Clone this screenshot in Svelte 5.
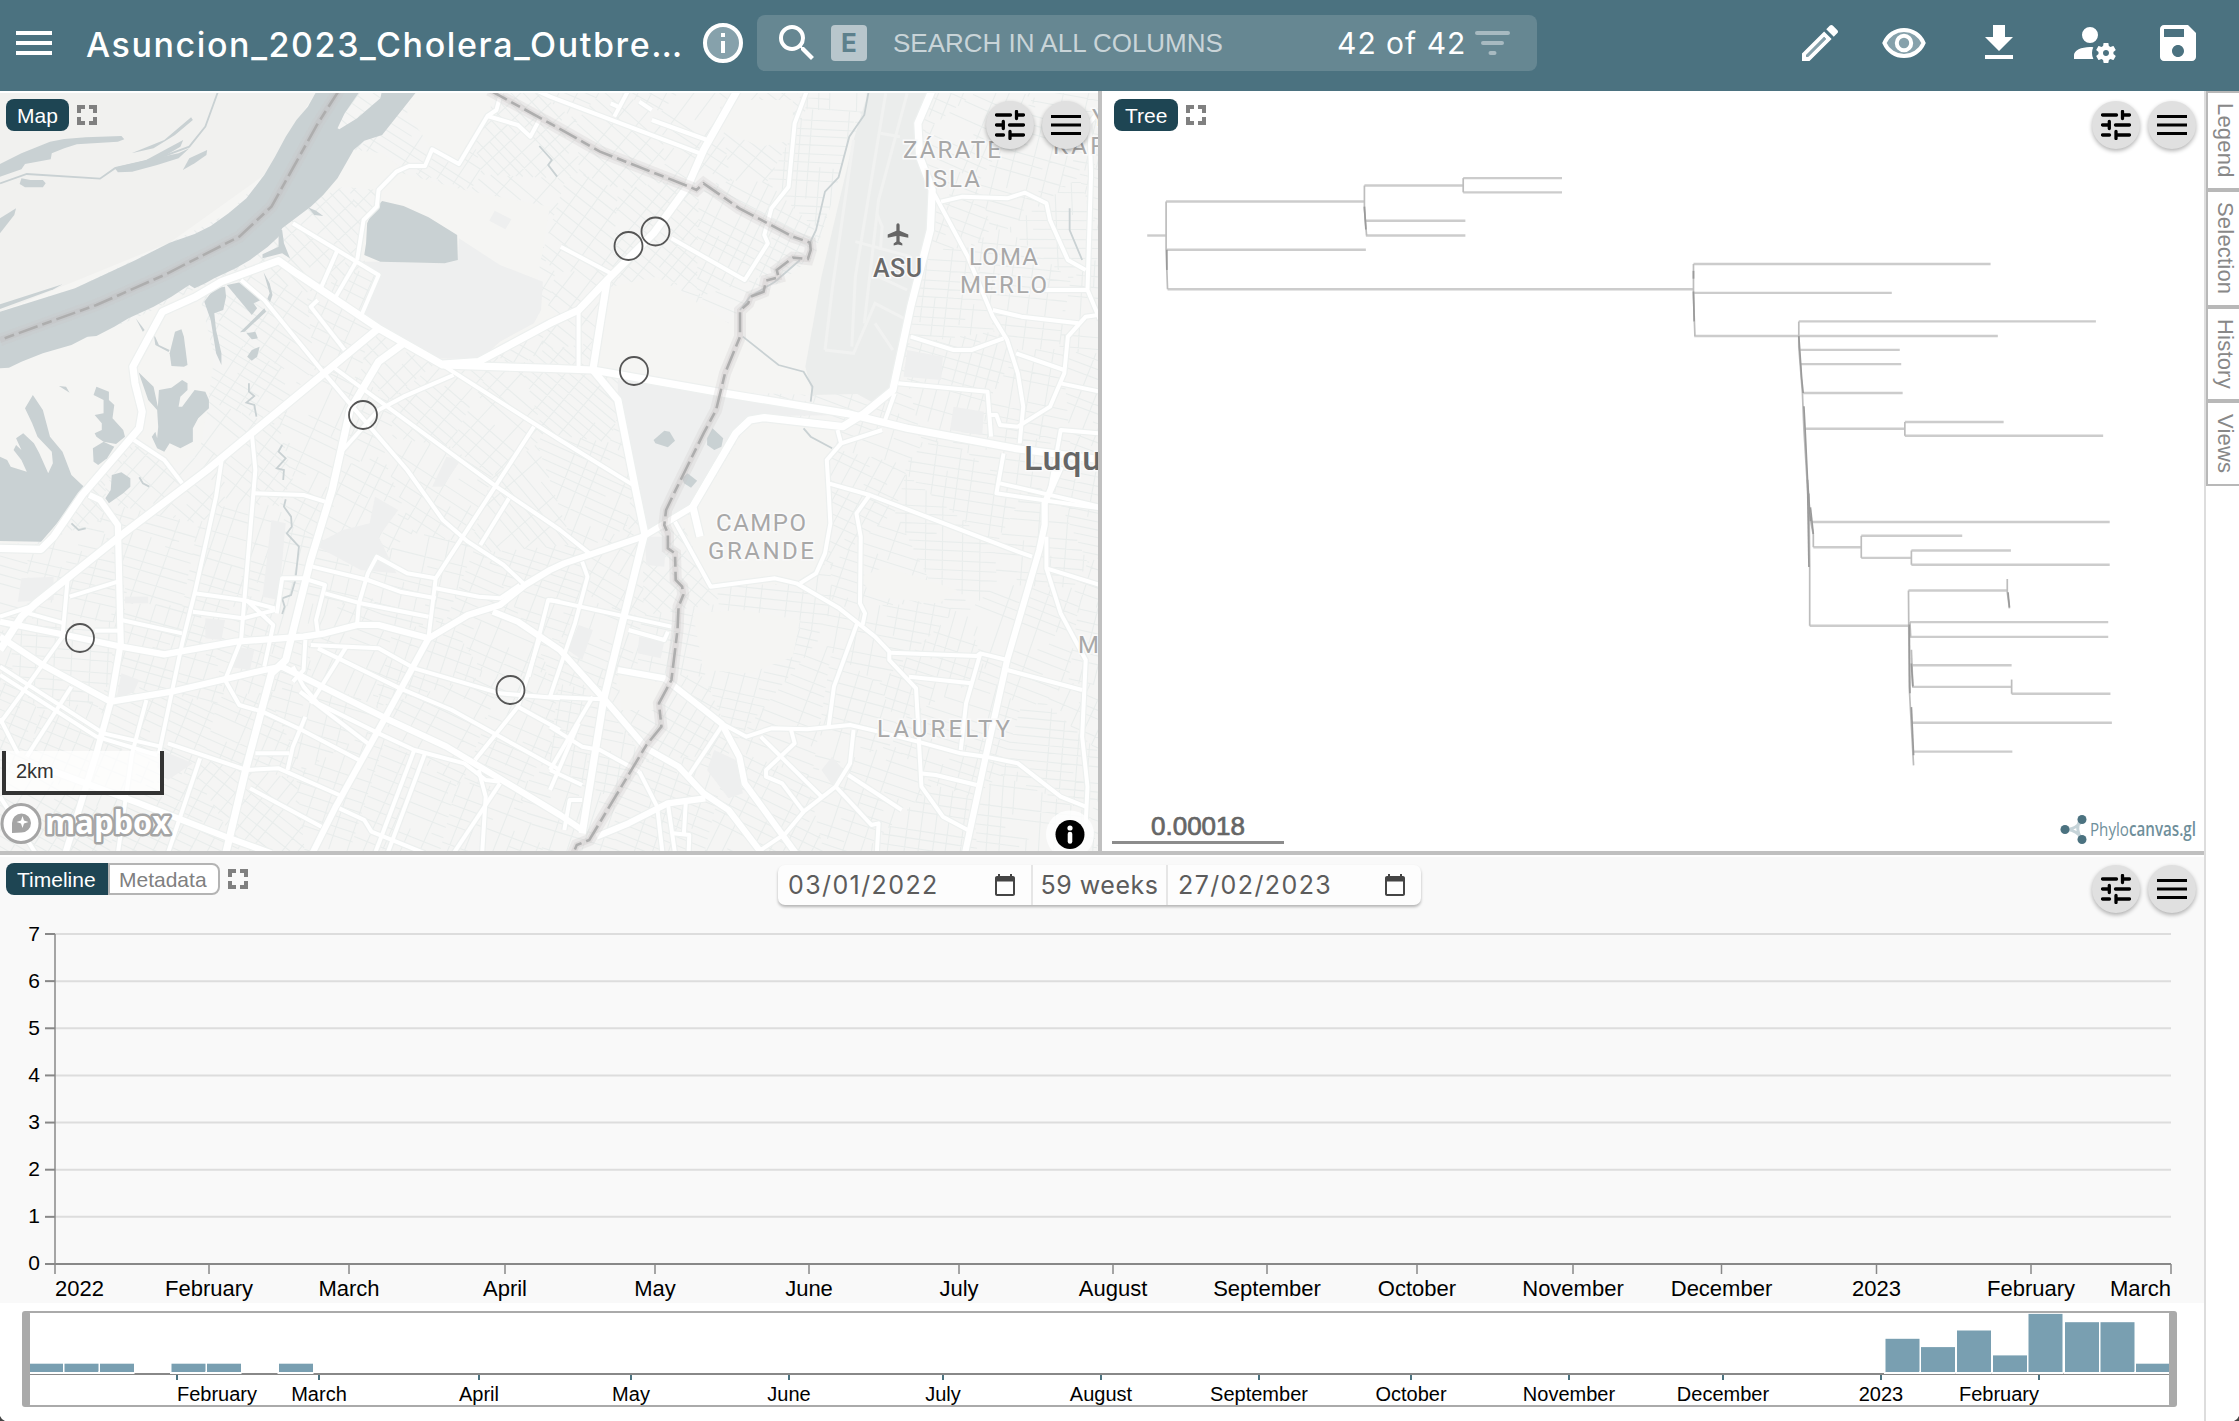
<script>
  // Material icon outlines, 24-unit box
  const icons = {
    menu: 'M3 18h18v-2H3v2zm0-5h18v-2H3v2zm0-7v2h18V6H3z',
    search: 'M15.5 14h-.79l-.28-.27A6.471 6.471 0 0 0 16 9.5 6.5 6.5 0 1 0 9.5 16c1.61 0 3.09-.59 4.23-1.57l.27.28v.79l5 4.99L20.49 19l-4.99-5zm-6 0C7.01 14 5 11.99 5 9.5S7.01 5 9.5 5 14 7.01 14 9.5 11.99 14 9.5 14z',
    edit: 'M14.06 9.02l.92.92L5.92 19H5v-.92l9.06-9.06M17.66 3c-.25 0-.51.1-.7.29l-1.83 1.83 3.75 3.75 1.83-1.83c.39-.39.39-1.02 0-1.41l-2.34-2.34c-.2-.2-.45-.29-.71-.29zm-3.6 3.19L3 17.25V21h3.75L17.81 9.94l-3.75-3.75z',
    download: 'M5 20h14v-2H5v2zM19 9h-4V3H9v6H5l7 7 7-7z',
    account: 'M10 4A4 4 0 0 0 6 8A4 4 0 0 0 10 12A4 4 0 0 0 14 8A4 4 0 0 0 10 4M17 12C16.87 12 16.76 12.09 16.74 12.21L16.55 13.53C16.25 13.66 15.96 13.82 15.7 14L14.46 13.5C14.35 13.5 14.22 13.5 14.15 13.63L13.15 15.36C13.09 15.47 13.11 15.6 13.21 15.68L14.27 16.5C14.25 16.67 14.24 16.83 14.24 17C14.24 17.17 14.25 17.33 14.27 17.5L13.21 18.32C13.12 18.4 13.09 18.53 13.15 18.64L14.15 20.37C14.21 20.5 14.34 20.5 14.46 20.5L15.7 20C15.96 20.18 16.24 20.35 16.55 20.47L16.74 21.79C16.76 21.91 16.86 22 17 22H19C19.11 22 19.22 21.91 19.24 21.79L19.43 20.47C19.73 20.34 20 20.18 20.27 20L21.5 20.5C21.63 20.5 21.76 20.5 21.83 20.37L22.83 18.64C22.89 18.53 22.86 18.4 22.77 18.32L21.7 17.5C21.72 17.33 21.74 17.17 21.74 17C21.74 16.83 21.73 16.67 21.7 16.5L22.76 15.68C22.85 15.6 22.88 15.47 22.82 15.36L21.82 13.63C21.76 13.5 21.63 13.5 21.5 13.5L20.27 14C20 13.82 19.73 13.65 19.42 13.53L19.23 12.21C19.22 12.09 19.11 12 19 12H17M10 14C5.58 14 2 15.79 2 18V20H11.68A7 7 0 0 1 11 17A7 7 0 0 1 11.64 14.09C11.11 14.03 10.56 14 10 14M18 15.5C18.83 15.5 19.5 16.16 19.5 17C19.5 17.84 18.83 18.5 18 18.5C17.16 18.5 16.5 17.84 16.5 17C16.5 16.16 17.17 15.5 18 15.5Z',
    save: 'M17 3H5c-1.11 0-2 .9-2 2v14c0 1.1.89 2 2 2h14c1.1 0 2-.9 2-2V7l-4-4zm-5 16c-1.66 0-3-1.34-3-3s1.34-3 3-3 3 1.34 3 3-1.34 3-3 3zm3-10H5V5h10v4z',
    plane: 'M21.500 15.500v-3L13.500 9V4C13.500 2.800 12.800 2 12 2s-1.500.8-1.500 2V9l-8 3.500v3l8-1.700V19l-2.500 1.700V22.500l4-.8 4 .8v-1.800L13.500 19v-5.200l8 1.700z'
  };

  // ---- street network ----
  let state = 20230;
  const rnd = () => {
    state = (state * 1664525 + 1013904223) % 4294967296;
    return state / 4294967296;
  };

  function clipHalf(poly, px, py, nx, ny) {
    const out = [];
    for (let i = 0; i < poly.length; i++) {
      const a = poly[i], b = poly[(i + 1) % poly.length];
      const da = (a[0] - px) * nx + (a[1] - py) * ny;
      const db = (b[0] - px) * nx + (b[1] - py) * ny;
      if (da <= 0) out.push(a);
      if (da * db < 0) {
        const t = da / (da - db);
        out.push([a[0] + (b[0] - a[0]) * t, a[1] + (b[1] - a[1]) * t]);
      }
    }
    return out;
  }

  // interval of the line p + t*d inside a convex polygon
  function span(poly, px, py, dx, dy) {
    const hits = [];
    for (let i = 0; i < poly.length; i++) {
      const a = poly[i], b = poly[(i + 1) % poly.length];
      const sa = (a[0] - px) * dy - (a[1] - py) * dx;
      const sb = (b[0] - px) * dy - (b[1] - py) * dx;
      if (sa * sb < 0) {
        const t = sa / (sa - sb);
        const x = a[0] + (b[0] - a[0]) * t, y = a[1] + (b[1] - a[1]) * t;
        hits.push((x - px) * dx + (y - py) * dy);
      }
    }
    return hits.length > 1 ? [Math.min(...hits), Math.max(...hits)] : null;
  }

  function baseAngle(x, y) {
    if (x < 560) return y < 520 ? 38 : y < 660 ? 14 : 27;
    if (x < 760) return y < 420 ? 30 : y < 620 ? 34 : 22;
    return y < 480 ? 12 : 14;
  }

  function buildStreets() {
    const seeds = [];
    for (let gy = 60; gy < 900; gy += 84)
      for (let gx = -20; gx < 1160; gx += 88)
        seeds.push([gx + (rnd() - 0.5) * 70, gy + (rnd() - 0.5) * 66]);
    let d = '';
    for (const s of seeds) {
      let cell = [[-10, 85], [1105, 85], [1105, 860], [-10, 860]];
      for (const o of seeds) {
        if (o === s) continue;
        cell = clipHalf(cell, (s[0] + o[0]) / 2, (s[1] + o[1]) / 2, o[0] - s[0], o[1] - s[1]);
      }
      if (cell.length < 3) continue;
      const base = (baseAngle(s[0], s[1]) + (rnd() - 0.5) * 24) * Math.PI / 180;
      const step = [8 + rnd() * 3, 11 + rnd() * 8];
      for (let f = 0; f < 2; f++) {
        const an = base + f * (Math.PI / 2 + (rnd() - 0.5) * 0.12);
        const dx = Math.cos(an), dy = Math.sin(an);
        for (let k = -110; k < 110; k += step[f] * (0.85 + rnd() * 0.35)) {
          const px = s[0] - dy * k, py = s[1] + dx * k;
          const iv = span(cell, px, py, dx, dy);
          if (!iv) continue;
          let t = iv[0];
          while (t < iv[1]) {
            const e = Math.min(iv[1], t + 20 + rnd() * 70);
            if (rnd() > 0.17)
              d += `M${(px + dx * t).toFixed(1)} ${(py + dy * t).toFixed(1)}L${(px + dx * e).toFixed(1)} ${(py + dy * e).toFixed(1)}`;
            t = e;
          }
        }
      }
    }
    return d;
  }
  const streets = buildStreets();

  // Quadrants of the base map: offset, then geometry in map units
  const openLand = [
    { x: 0, y: 0, d: ['0,0 888,0 862,50 740,255 640,370 475,458 210,595 0,665', '0,830 250,740 380,685 560,590 620,575 460,670 372,830 398,965 390,1015 150,1340 0,1370', '1160,0 1390,0 1365,78 1285,222 1210,178 1140,70', '1070,300 1110,245 1300,300 1540,350 1500,600 1568,690 1340,825 1215,805 1015,680 1060,555 1010,500 1025,390', '900,320 990,180 1070,190 1120,230 1060,300 960,290', '440,690 560,620 600,800 580,960 560,1080 480,1130 380,1040 398,965 380,850'] },
    { x: 1540, y: 0, d: ['170,590 300,560 500,700 530,660 530,740 480,900 130,830', '530,660 600,610 740,500 800,300 860,60 730,915 490,905', '480,30 680,30 680,150 590,170 480,120', '430,1220 560,990 600,985 805,1020 775,1110 785,1300 745,1450 690,1480 450,1490 370,1300'] },
    { x: 1540, y: 1140, d: ['400,430 540,420 700,450 680,560 560,610 430,600', '190,610 320,640 300,720 200,720', '870,320 940,290 1140,360 1090,400 900,380'] }
  ];
  const parks = [
    { x: 0, y: 0, d: ['1285,445 1400,525 1520,575 1515,660 1495,700 1400,755 1345,808 1215,805 1015,680 1062,555 1010,515 1070,515 1245,520 1282,510', '1385,362 1432,388 1415,418 1370,392', '1250,1100 1290,1110 1240,1190 1210,1190'] },
    { x: 1540, y: 0, d: ['190,870 490,915 850,975 600,978 550,990 515,1030 420,1220 320,1320 265,1340 235,1200 190,930', '1000,780 1100,800 1095,870 990,860', '1130,950 1215,965 1210,1035 1120,1020'] },
    { x: 0, y: 1140, d: ['1050,80 1115,120 1060,200 1110,310 1010,300 880,225 960,180 1035,160', '760,150 800,160 780,390 735,380', '575,445 630,450 620,510 575,505', '660,530 712,540 700,600 640,590', '60,325 150,320 150,390 50,395', '340,610 390,630 375,665 325,690', '450,840 540,880 470,930 440,890', '350,380 415,380 415,400 350,400'] },
    { x: 1540, y: 1140, d: ['460,840 520,870 540,970 500,985 440,900', '265,200 325,200 320,290 270,285', '80,465 120,480 90,570 50,540', '790,860 830,910 790,945 760,900', '250,500 320,515 310,565 245,550'] }
  ];
  const water = [
    { x: 0, y: 0, d: [
      '888,0 862,50 830,90 800,140 770,200 740,255 690,325 640,370 590,408 545,432 475,458 380,510 210,595 0,665 0,835 25,833 60,815 120,790 200,765 245,740 270,738 320,710 360,685 430,650 480,620 530,585 545,595 575,580 600,565 660,535 700,510 750,470 780,440 790,415 870,350 905,315 945,265 990,180 1020,152 1070,135 1170,0 1070,0 1065,25 1000,85 950,118 945,115 965,70 1010,0',
      '0,222 60,190 140,155 180,147 240,142 340,138 348,148 330,155 215,163 180,175 145,190 142,208 70,222 60,238 0,260',
      '320,232 400,212 500,190 530,175 500,205 440,225 370,245 330,247', '368,190 460,150 535,82 540,90 490,135 430,175', '395,218 470,175 513,150 505,170 450,205', '512,240 530,205 580,180 578,195 545,220', '60,265 85,270 120,270 128,280 120,292 70,292 55,282', '0,385 45,355 40,375 0,430', '0,643 175,583 150,598 0,657',
      '1070,333 1130,348 1200,382 1280,435 1282,510 1245,520 1065,515 1020,495 1025,460 1028,400 1045,360',
      '780,420 790,420 795,460 812,505 790,490 735,505 735,493 780,470', '862,352 885,362 905,378 880,375',
      '490,725 508,718 515,740 525,825 515,830 480,828 475,790', '572,635 600,595 630,590 633,620 625,660 600,670 605,720 620,790 620,825 605,790 590,690', '635,585 680,575 730,630 710,640 720,655 705,675', '740,655 745,665 685,725 672,727', '738,547 755,580 763,615 755,640 745,635 755,610', '690,730 715,725 722,745 705,748', '692,800 705,780 727,770 720,800 705,812', '380,685 405,720 400,725', '430,730 445,765 475,780 472,786 435,765',
      '445,900 480,893 510,870 525,880 525,900 505,920 500,950 510,950 545,900 575,905 585,930 585,955 555,985 540,1015 540,1055 505,1075 475,1060 460,1085 440,1075 425,1040 435,1025 440,1045 443,1010 440,960 415,930 388,847 430,890 442,950',
      '0,1100 20,1110 30,1130 75,1145 60,1110 38,1080 45,1065 60,1080 45,1045 65,1030 95,1060 110,1090 135,1150 148,1120 145,1085 105,1040 90,1000 70,955 92,915 120,960 140,1040 175,1085 200,1155 235,1190 200,1250 115,1355 0,1353',
      '270,890 305,905 305,930 320,945 315,985 345,1020 350,1040 325,1062 290,1055 270,1040 265,1030 285,1020 285,1000 265,975 290,970 290,930 262,915', '260,1075 290,1055 320,1070 300,1105 275,1125 262,1115', '313,1155 340,1147 365,1165 365,1190 345,1210 305,1240 295,1225 310,1200', '165,888 185,890 195,908'] },
    { x: 1540, y: 0, d: ['290,1050 320,1022 335,1025 350,1052 330,1072 295,1060', '440,1045 455,1015 485,1045 480,1070 460,1080 440,1065', '370,1165 385,1150 412,1172 395,1193 375,1180'] }
  ];
  const creeks = [
    { x: 0, y: 0, d: ['0,280 75,252 280,266 320,236 440,206 530,170 575,110 612,0', '697,880 697,905 712,918 690,938 712,945 718,980', '790,1065 780,1085 800,1105 775,1135 795,1140 793,1170', '1510,168 1545,210 1535,225 1560,260', '390,1162 400,1180 418,1190'] },
    { x: 0, y: 1140, d: ['800,88 795,110 815,140 817,170 803,190 837,230 827,330 815,375 790,385 797,410 790,432', '200,160 220,180 240,175'] },
    { x: 1540, y: 0, d: ['893,0 880,75 838,140 808,262 770,305 745,420 725,465', '700,510 630,575 560,620 532,660', '540,740 640,825 710,845 735,890 730,935', '710,1015 730,1040 790,1075', '1455,355 1455,420 1490,510'] }
  ];
  const boundary = [
    '950,0 890,100 825,225 760,350 670,440 460,555 270,645 140,695 0,750',
    '1370,0 1540,100 1680,185 1930,290 1950,300 1970,280 2070,355 2220,440 2268,458 2270,480 2262,507 2220,503 2175,540 2180,562 2145,572 2138,605 2102,620 2095,640 2072,662 2072,740 2030,850 2005,960 1970,1030 1885,1215 1865,1260 1860,1305 1870,1330 1870,1375 1890,1390 1892,1470 1910,1490 1913,1515 1900,1550 1897,1620 1880,1770 1845,1840 1852,1910 1810,1965 1650,2250 1615,2265 1605,2290'
  ];
  const roads = [
    { w: 7.2, x: 0, y: 0, d: ['-5,1375 115,1378 150,1340 230,1215 390,1015 398,965 378,880 372,830 455,665 545,622 620,575 780,512 830,550 1060,715 1240,825 1540,835 1660,840 2030,910 2370,970 2540,1015 2840,1075 3090,1110', '1060,715 580,1140 340,1335 100,1540 60,1580 0,1680', '1130,760 1060,815 980,960 930,1200 870,1410 800,1710 760,1750 690,2030 630,2300', '1240,822 1340,815 1540,700 1620,660 1700,570 1830,430 1925,290 1970,180 2065,0', '1660,840 1730,930 1780,1200 1805,1330 1740,1610 1690,1830 1630,2230', '1960,1340 1940,1250 2060,1030 2100,990 2140,983 2360,1010 2420,970 2500,900 2550,650 2605,420 2610,300 2575,200 2570,100 2610,0', '1700,570 1660,840'] },
    { w: 6.2, x: 0, y: 1140, d: ['0,455 160,490 340,530 460,553 660,515 850,500 910,490 1000,465 1060,465 1200,505 1310,435 1400,405 1470,345 1540,300 1580,280 1800,200 1940,110 2010,-20', '0,500 120,585 310,695 480,665 740,600 790,590 1080,745 1250,830 1568,1035 1630,1080', '1200,505 1080,740 940,1010 870,1160', '250,75 280,90 330,165 338,520 310,695 270,850 180,1160', '140,900 390,1000 630,1100 760,1150', '1380,425 1450,455 1568,540 1690,685 1810,835 1900,890 1970,970 2040,1020 2140,1160', '1730,600 1860,625 2020,760 2070,860 2085,940 2235,1160', '2970,-10 2925,100 2925,165 2910,240 2820,570 2760,860 2700,1160', '1670,1100 1760,1060 1870,1000 1975,985'] },
    { w: 4, x: 0, y: 0, d: ['675,570 740,630 900,840 975,935 1140,1140 1240,1290 1310,1355 1410,1425 1470,1485', '925,825 1390,1190 1568,1320 1650,1390', '820,400 1060,555 1010,680', '945,480 900,590', '1000,510 935,630', '1000,510 1018,390 1055,350 1060,300 1110,245 1145,228 1190,228 1210,178 1285,222 1365,78 1390,60 1405,0', '1365,78 1450,105 1485,140 1510,90', '890,630 870,650 965,780', '1270,855 1130,920 1060,960 960,1080', '1210,805 1568,1050 1780,1190', '1495,1010 1220,1465 1200,1640', '375,1050 460,1110 510,1180', '622,1100 605,1220 545,1510 510,1660 445,1990', '705,1030 715,1140 685,1520 675,1650 630,1770 670,1845 735,1865 845,1920 1005,2010'] },
    { w: 4, x: 0, y: 1140, d: ['190,320 175,500 75,650 0,760', '0,440 100,405', '195,380 330,335', '340,450 510,490', '545,370 680,390 770,415', '540,425 680,445 770,420', '690,390 765,465 740,590', '712,70 850,75 910,95', '775,430 790,325 850,325 910,345 885,450 890,490', '875,290 1030,330 1120,365 1220,385', '910,370 1010,400 1200,440', '1000,460 1005,400 1030,310 1055,260 1140,310 1220,325', '1220,355 1340,380 1400,385 1455,345', '1345,225 1425,85', '0,590 290,790 450,830', '0,615 270,800 440,855', '470,820 690,900 780,895 950,975', '200,650 75,860', '0,745 50,850', '560,865 470,1150', '410,690 370,850 330,1150', '715,850 810,850', '855,740 820,830 805,900', '970,530 870,700', '855,510 850,600 820,635', '870,525 1060,535 1160,595 1400,670 1568,685', '890,535 1120,655 1265,720 1568,900', '820,590 850,650 890,700 1060,790', '840,665 1030,820', '700,955 900,1070', '950,1015 1020,1050 1040,1085 1190,1150', '1060,790 1160,840 1300,880 1360,930 1400,935', '1160,840 1050,1150', '1190,850 1085,1150', '1340,900 1360,980 1350,1150', '1400,940 1270,1150', '1510,510 1450,710 1330,870', '1450,710 1568,780', '1568,395 1535,390 1480,620', '80,430 180,460', '265,482 335,482', '0,980 100,1150'] },
    { w: 4, x: 1540, y: 0, d: ['-60,-10 0,20 420,190', '180,80 220,0', '170,40 190,50', '250,35 285,60', '285,90 440,150', '720,0 685,100 668,290 620,355 600,435 610,460 545,570 340,445', '30,470 170,550', '80,660 80,830', '1095,335 1155,320 1280,325 1330,308 1390,340 1400,390 1450,510 1500,540', '1075,310 1170,500 1240,680 1280,750 1310,850 1325,950 1315,1060', '1240,660 1320,680 1480,700', '1010,740 1130,780 1180,780 1270,745', '975,880 1225,905 1235,1040', '965,910 935,1000', '1305,790 1440,840', '1360,600 1505,600', '1540,60 1510,100 1515,250 1505,600 1540,690', '1535,675 1500,680 1450,740 1440,850 1400,950 1310,1010 1260,1005 1250,975 1230,975', '1430,880 1540,905', '1540,1030 1430,1020 1400,1200', '1270,1090 1250,1210 1540,1255', '1260,1180 1540,1250', '805,1020 815,1060 775,1110 780,1200 785,1300 770,1390 745,1450 700,1480', '815,1060 930,1020'] },
    { w: 4, x: 1540, y: 1140, d: ['350,155 450,350 630,325 690,340 810,415 910,500 950,545 950,570 1025,655 1040,950 1100,1040 1170,1080', '780,40 895,75 1310,245 1350,260', '895,75 858,130 870,200 868,400 882,430 875,465', '860,460 795,650 780,770', '480,760 550,800 620,775 720,778 840,765 920,785 1030,815 1150,850 1220,860 1310,880 1430,980 1500,1010', '1390,200 1390,295 1430,430 1500,570 1490,800 1505,950 1500,1060', '1390,295 1540,345', '955,548 1195,558 1205,550 1280,570', '1005,620 1180,640', '1205,550 1165,700 1150,840', '1280,600 1490,660', '1035,910 1080,915 1195,945', '480,770 390,915', '590,800 760,980', '675,780 685,820 605,900 605,920 650,940 710,1025 800,950 840,880 850,780', '710,1025 660,1090 590,1140', '800,950 900,1065 920,1060 915,1150', '835,915 985,1020', '330,1000 350,1150', '380,1000 375,1090', '345,1090 390,1095 388,1150', '250,905 300,1010 315,1150', '0,770 90,830 140,840 250,905', '0,390 85,410 340,470', '220,480 320,510 330,485', '90,275 105,320 70,460 0,680 145,688', '120,680 0,900', '0,900 90,945', '90,990 55,990 40,1080', '80,760 0,960'] }
  ];
  const runways = ['940,10 855,560 845,770', '1000,10 920,330 880,700', '855,455 1010,500', '770,780 850,790 910,640 1000,690', '915,370 930,410 925,480', '925,130 980,140', '910,700 960,780', '920,560 1000,600', '770,780 790,600 850,150'];

  const labels = [
    { t: 'ZÁRATE', x: 903, y: 158, w: 98 }, { t: 'ISLA', x: 924, y: 187, w: 56 },
    { t: 'LOMA', x: 969, y: 265, w: 69 }, { t: 'MERLO', x: 960, y: 293, w: 87 },
    { t: 'CAMPO', x: 716, y: 531, w: 90 }, { t: 'GRANDE', x: 708, y: 559, w: 106 },
    { t: 'LAURELTY', x: 877, y: 737, w: 133 }, { t: 'M', x: 1078, y: 653, w: 18 },
    { t: 'KAR', x: 1053, y: 154, w: 52 }, { t: 'Y', x: 1092, y: 126, w: 17 }
  ];
  const cases = [[655.5, 231.5], [628.5, 246], [634, 371], [363, 415], [80, 638], [510.5, 690]];

  // ---- tree branches ----
  const branchesH = [[65, 208, 91], [91, 134, 364], [364, 99, 500], [500, 83, 636], [500, 114, 636], [366, 176, 503], [366, 208, 503], [92, 239, 366], [93, 325, 817], [817, 270, 1226], [818, 333, 1090], [818, 427, 1236], [962, 395, 1371], [964, 457, 1101], [965, 488, 1103], [968, 551, 1105], [971, 629, 1108], [1108, 614, 1244], [1108, 644, 1381], [980, 832, 1390], [982, 887, 1048], [1048, 862, 1187], [1048, 910, 1117], [1117, 894, 1254], [1117, 925, 1390], [977, 1058, 1114], [1113, 981, 1249], [1115, 1050, 1388], [1115, 1082, 1388], [1117, 1144, 1255], [1118, 1191, 1255], [1255, 1206, 1391], [1118, 1269, 1393], [1120, 1332, 1256]];
  const branchesV = ['91,134 91,239 93,325', '364,99 364,150 367,208', '500,83 500,114', '817,270 817,340 819,427', '962,395 962,450 967,551 969,629 976,810 982,860 982,887', '976,770 977,930 977,1058', '1108,614 1108,644', '1048,862 1048,910', '1117,894 1117,925', '1249,956 1249,985 1252,1020', '1113,981 1114,1190 1120,1362', '1115,1050 1116,1082', '1117,1110 1119,1191', '1255,1175 1255,1206'];
  const darkV = ['364,145 366,195', '92,239 92,283', '817,285 817,302', '817,330 818,395', '962,427 966,520 968,551', '969,580 971,640 974,740 978,830', '974,740 976,930', '978,800 982,858', '1250,985 1252,1018', '1114,1055 1115,1205', '1117,1140 1119,1190', '1117,1235 1120,1340'];

  // ---- timeline ----
  const ys = [7, 6, 5, 4, 3, 2, 1, 0].map((v, i) => ({ v, y: 77 + i * 47.14 }));
  const months = ['2022', 'February', 'March', 'April', 'May', 'June', 'July', 'August', 'September', 'October', 'November', 'December', '2023', 'February', 'March'];
  const tickX = [55, 209, 349, 505, 655, 809, 959, 1113, 1267, 1417, 1573, 1721.5, 1876.5, 2031, 2171];
  const anchor = (i, n) => (i === 0 ? 'start' : i === n - 1 ? 'end' : 'middle');
  const main = months.map((t, i) => ({ t, x: tickX[i], a: anchor(i, months.length) }));
  const brushX = [177, 319, 479, 631, 789, 943, 1101, 1259, 1411, 1569, 1723, 1881, 2039];
  const brush = months.slice(1, 14).map((t, i) => ({ t, x: brushX[i], a: anchor(i, 13) }));
  const bars = [[30, 1, 33], [64.5, 1], [100, 1], [171.5, 1], [207, 1], [279, 1], [1885.5, 4], [1921, 3], [1957, 5], [1993, 2], [2028.5, 7], [2065, 6], [2100.5, 6], [2136, 1, 33]];
  const tabs = [{ t: 'Legend', h: 99 }, { t: 'Selection', h: 117 }, { t: 'History', h: 94 }, { t: 'Views', h: 85 }];
</script>

{#snippet expand()}
  <svg class="expand" viewBox="0 0 20 20"><path d="M2 8V2h6M12 2h6v6M18 12v6h-6M8 18H2v-6" /></svg>
{/snippet}

{#snippet controls()}
  <div class="controls">
    <button class="round" aria-label="Options">
      <svg width="30" height="30" viewBox="0 0 30 30"><path class="tune" d="M1.5 5H15.500M21.500 5H28.500M21.500 1.500V8.500M1.500 15H8M8.300 11.500V18.500M14.500 15H28.500M1.500 25H8.500M15 21.500V28.500M15 25H28.500" /></svg>
    </button>
    <button class="round" aria-label="Menu">
      <svg width="30" height="22" viewBox="0 0 30 22"><path class="lines" d="M0 2.500H30M0 11H30M0 19.500H30" /></svg>
    </button>
  </div>
{/snippet}

{#snippet calendar()}
  <svg class="cal" viewBox="0 0 20 22"><path d="M18 2h-1V0h-2v2H5V0H3v2H2C.9 2 0 2.900 0 4v16c0 1.100.9 2 2 2h16c1.100 0 2-.9 2-2V4c0-1.100-.9-2-2-2zm0 18H2V7.500h16z" /></svg>
{/snippet}

<div class="app">
  <header>
    <svg class="ico burger" viewBox="0 0 24 24"><path d={icons.menu} /></svg>
    <h1>Asuncion_2023_Cholera_Outbre…</h1>
    <svg class="ico info" viewBox="0 0 24 24">
      <circle class="tint" cx="12" cy="12" r="9" /><circle class="ring" cx="12" cy="12" r="9" />
      <path d="M11 7h2v2h-2zM11 11h2v6h-2z" />
    </svg>
    <div class="search">
      <svg class="ico" viewBox="0 0 24 24"><path d={icons.search} /></svg>
      <span class="badge">E</span>
      <span class="ph">SEARCH IN ALL COLUMNS</span>
      <span class="count">42 of 42</span>
      <svg class="filter" viewBox="0 0 35 24"><path d="M2 2H33M8 12H27M15.500 22H19.500" /></svg>
    </div>
    <svg class="ico edit" viewBox="0 0 24 24"><path d={icons.edit} /><path class="tint" d="M14.060 9.020l.92.92L5.920 19H5v-.92z" /></svg>
    <svg class="ico eye" viewBox="0 0 24 24">
      <path class="tint eyeline" d="M2.200 12C3.900 8 7.700 5.500 12 5.500S20.100 8 21.800 12C20.100 16 16.300 18.500 12 18.500S3.900 16 2.200 12z" />
      <circle class="ring" cx="12" cy="12" r="3.600" />
    </svg>
    <svg class="ico down" viewBox="0 0 24 24"><path d={icons.download} /></svg>
    <svg class="ico acct" viewBox="0 0 24 24"><path d={icons.account} /></svg>
    <svg class="ico save" viewBox="0 0 24 24"><path d={icons.save} /></svg>
  </header>

  <div class="body">
    <main>
      <div class="top">
        <section class="map">
          <svg class="canvas" width="1098" height="758" viewBox="0 93 1098 758">
            <path class="street" d={streets} />
            <g transform="translate(0 90) scale(.357143 .333333)">
              {#each openLand as g}<g transform="translate({g.x} {g.y})">{#each g.d as p}<polygon class="open" points={p} />{/each}</g>{/each}
              <polygon class="west" points="0,0 888,0 740,255 475,458 0,665" />
              {#each parks as g}<g transform="translate({g.x} {g.y})">{#each g.d as p}<polygon class="park" points={p} />{/each}</g>{/each}
              <g transform="translate(1540 0)">
                <polygon class="airport" points="893,0 1075,0 1030,100 1030,200 1070,300 1060,420 1020,600 970,880 940,925 900,935 860,912 735,915 715,830 760,560 850,150" />
                {#each runways as p}<polyline class="runway" points={p} />{/each}
              </g>
              {#each water as g}<g transform="translate({g.x} {g.y})">{#each g.d as p}<polygon class="water" points={p} />{/each}</g>{/each}
              {#each creeks as g}<g transform="translate({g.x} {g.y})">{#each g.d as p}<polyline class="creek" points={p} />{/each}</g>{/each}
              {#each roads as g}<g transform="translate({g.x} {g.y})">{#each g.d as p}<polyline class="casing" stroke-width={g.w + 2.4} points={p} />{/each}</g>{/each}
              {#each roads as g}<g transform="translate({g.x} {g.y})">{#each g.d as p}<polyline class="road" stroke-width={g.w} points={p} />{/each}</g>{/each}
              {#each boundary as p}
                <polyline class="glow wide" points={p} /><polyline class="glow" points={p} /><polyline class="border" points={p} />
              {/each}
            </g>
            <svg x="885" y="221" width="26" height="26" viewBox="0 0 24 24"><path class="plane" d={icons.plane} /></svg>
            {#each labels as l}<text class="place" x={l.x} y={l.y} textLength={l.w}>{l.t}</text>{/each}
            <text class="place code" x="873" y="277" textLength="49">ASU</text>
            <text class="place city" x="1024" y="470">Luque</text>
            {#each cases as c}<circle class="case" cx={c[0]} cy={c[1]} r="14" />{/each}
            <circle class="mb" cx="21" cy="823.500" r="19" />
            <path class="mbdrop" d="M12 833V823a9.500 9.500 0 1 1 9.500 9.500z" />
            <path class="mbstar" d="M22.500 816l1.500 4.500 4.500 1.500-4.500 1.500-1.500 4.500-1.500-4.500-4.500-1.500 4.500-1.500z" />
            <text class="mbtext" x="45" y="834" textLength="125" lengthAdjust="spacingAndGlyphs">mapbox</text>
            <circle class="halo" cx="1070" cy="834.500" r="24" />
            <circle cx="1070" cy="834.500" r="14.500" />
            <circle class="dot" cx="1070" cy="828" r="2.600" />
            <path class="stem" d="M1070 834v7.500" />
          </svg>
          <div class="tags"><span class="tag on">Map</span>{@render expand()}</div>
          {@render controls()}
          <div class="scale">2km</div>
        </section>
        <section class="tree">
          <svg class="canvas" width="1102" height="758" viewBox="1102 93 1102 758">
            <g transform="translate(1100 140) scale(.7264 .45918)">
              {#each branchesH as b}<line class="bh" x1={b[0]} y1={b[1]} x2={b[2]} y2={b[1]} />{/each}
              {#each branchesV as p}<polyline class="bv" points={p} />{/each}
              {#each darkV as p}<polyline class="bv dark" points={p} />{/each}
            </g>
            <text class="sub" x="1198" y="835" textLength="94">0.00018</text>
            <path class="subline" d="M1112 842.500H1284" />
            <path class="logoarc" d="M2067 829.500q10-1 15-9M2067 829.500q10 1 15 9M2080 820q-5 9 1 18" />
            <circle class="logodot" cx="2065" cy="829.500" r="4.500" /><circle class="logodot" cx="2082" cy="819.500" r="4.500" /><circle class="logodot" cx="2082" cy="839.500" r="4.500" />
            <text class="logo" x="2090" y="835.500" textLength="106" lengthAdjust="spacingAndGlyphs">Phylo<tspan class="lb">canvas.gl</tspan></text>
          </svg>
          <div class="tags"><span class="tag on">Tree</span>{@render expand()}</div>
          {@render controls()}
        </section>
      </div>

      <section class="timeline">
        <div class="bar">
          <span class="tag on first">Timeline</span><span class="tag off">Metadata</span>
          {@render expand()}
          <div class="range">
            <div class="date"><span>03/01/2022</span>{@render calendar()}</div>
            <div class="weeks"><span>59 weeks</span></div>
            <div class="date"><span>27/02/2023</span>{@render calendar()}</div>
          </div>
          {@render controls()}
        </div>
        <svg class="chart" width="2204" height="446" viewBox="0 0 2204 446">
          {#each ys as r}
            <path class="grid" d="M55 {r.y}H2171" /><path class="tick2" d="M45 {r.y}H55" />
            <text class="num" x="40" y={r.y + 6.5}>{r.v}</text>
          {/each}
          <path class="tick2" d="M45 407H2171" /><path class="tick" d="M55 77V407" />
          {#each main as m}
            <path class="tick" d="M{m.x} 407v10" />
            <text class="month" x={m.x} y="439" text-anchor={m.a}>{m.t}</text>
          {/each}
        </svg>
        <svg class="brush" width="2204" height="118" viewBox="0 1303 2204 118">
          <path class="frame" d="M26 1312H2173M26 1406H2173" />
          <path class="axis" d="M30 1374H2169" />
          {#each bars as b}
            <rect class="gap" x={b[0] - 1.5} y="1371" width={(b[2] ?? 34) + 2} height="3" />
            <rect class="count-bar" x={b[0]} y={1372 - b[1] * 8.3} width={b[2] ?? 34} height={b[1] * 8.3} />
          {/each}
          {#each brush as m}
            <path class="btick" d="M{m.x} 1375v5" />
            <text class="bmonth" x={m.x} y="1400.500" text-anchor={m.a}>{m.t}</text>
          {/each}
          <rect class="handle" x="22" y="1311" width="8" height="96" rx="3" /><rect class="handle" x="2169" y="1311" width="8" height="96" rx="3" />
          <path class="corner" d="M0 1416q1 3 5 5H0z" />
        </svg>
      </section>
    </main>
    <aside>
      {#each tabs as t}<div class="side" style:height="{t.h}px"><span>{t.t}</span></div>{/each}
      <svg class="edge" width="5" height="5" viewBox="0 0 5 5"><path d="M5 0Q4 3 0 5H5z" /></svg>
    </aside>
  </div>
</div>

<style>
  :global(body) { margin: 0; background: #fff; }
  .app { width: 2239px; height: 1421px; overflow: hidden; font-family: "Liberation Sans", Arial, sans-serif; display: flex; flex-direction: column; }
  header { box-sizing: border-box; height: 91px; flex: none; background: #4b7280; display: flex; align-items: center; padding: 0 0 5px 10px; color: #fff; }
  .ico { width: 48px; height: 48px; flex: none; fill: #fff; }
  h1 { margin: 0 0 0 28px; width: 600px; font: 500 34px/44px Inter, sans-serif; letter-spacing: 1.6px; white-space: nowrap; padding-top: 3px; flex: none; }
  .info { margin-left: 13px; }
  .tint { fill: #86a1ab; }
  .ring { fill: none; stroke: #fff; stroke-width: 2; }
  .eyeline { stroke: #fff; stroke-width: 2; }
  .search { box-sizing: border-box; margin-left: 10px; width: 780px; height: 56px; border-radius: 8px; background: #668792; display: flex; align-items: center; padding-left: 16px; flex: none; }
  .badge { width: 36px; height: 36px; margin-left: 10px; border-radius: 4px; background: #b8c6cc; color: #5d808c; font: 700 26px/36px Inter, sans-serif; text-align: center; flex: none; }
  .ph { margin-left: 26px; width: 444px; font-size: 26px; color: #c9d4d8; white-space: nowrap; flex: none; }
  .count { width: 138px; font: 400 30px/40px Inter, sans-serif; letter-spacing: 1px; white-space: nowrap; flex: none; }
  .filter { width: 35px; height: 24px; fill: none; stroke: #a8bac1; stroke-width: 4; stroke-linecap: round; }
  .edit { margin-left: 259px; }
  .eye { margin-left: 36px; }
  .down { margin-left: 47px; }
  .acct { margin-left: 47px; }
  .save { margin-left: 36px; }

  .body { display: flex; flex: 1; min-height: 0; }
  main { width: 2204px; flex: none; display: flex; flex-direction: column; }
  .top { display: flex; height: 760px; border-bottom: 4px solid #c0c0c0; flex: none; }
  section { position: relative; }
  .map { width: 1098px; padding-top: 2px; border-right: 4px solid #c0c0c0; }
  .tree { width: 1102px; padding-top: 2px; }
  .canvas { display: block; overflow: hidden; }
  .map .canvas { background: #f5f5f4; }
  .tags { position: absolute; left: 6px; top: 8px; display: flex; align-items: center; gap: 8px; }
  .tree .tags { left: 12px; gap: 8px; }
  .tag { box-sizing: border-box; height: 32px; line-height: 34px; padding: 0 11px; font-size: 21px; border-radius: 8px; white-space: nowrap; }
  .on { background: #1e4553; color: #fff; }
  .first { border-radius: 8px 0 0 8px; width: 102px; }
  .off { width: 112px; padding: 0 9px; border: 2px solid #b4b4b4; border-radius: 0 8px 8px 0; background: #fff; color: #808080; line-height: 30px; }
  .expand { width: 20px; height: 20px; fill: none; stroke: #808080; stroke-width: 4; }
  .controls { position: absolute; top: 10px; right: 8px; display: flex; gap: 8px; }
  .round { width: 48px; height: 48px; border: 0; border-radius: 50%; padding: 0; background: #e0e0e0; box-shadow: 0 2px 4px rgba(0,0,0,.3); display: flex; align-items: center; justify-content: center; }
  .tune { stroke: #000; stroke-width: 3.3; fill: none; stroke-linecap: round; }
  .lines { stroke: #000; stroke-width: 3.2; }
  .scale { position: absolute; left: 2px; top: 660px; box-sizing: border-box; width: 162px; height: 44px; border: 4px solid #333; border-top: 0; background: rgba(255,255,255,.75); padding-left: 10px; font-size: 20px; line-height: 41px; color: #333; }

  .street, .casing, .road, .creek, .glow, .border, .runway { fill: none; vector-effect: non-scaling-stroke; }
  .street { stroke: #e9edec; stroke-width: 1.1; }
  .open { fill: #f5f5f3; }
  .west { fill: #f1f1ef; }
  .park { fill: #eeefef; }
  .airport { fill: #ebedec; }
  .runway { stroke: #f1f2f1; stroke-width: 3; }
  .water { fill: #c9d1d3; }
  .creek { stroke: #c9d1d3; stroke-width: 1.8; }
  .casing { stroke: #edf0ef; stroke-linejoin: round; }
  .road { stroke: #fff; stroke-linejoin: round; }
  .glow { stroke: rgba(190,182,182,.25); stroke-width: 6; }
  .glow.wide { stroke: rgba(205,200,200,.25); stroke-width: 12; }
  .border { stroke: #aeaeae; stroke-width: 2.6; stroke-dasharray: 20 5 10 5; }
  .plane { fill: #666; }
  .place { font: 400 24px Roboto, sans-serif; fill: #a8a8a8; stroke: #fafafa; stroke-width: 3; paint-order: stroke; }
  .code { fill: #6a6a6a; font-weight: 500; font-size: 25px; }
  .city { fill: #666; font-weight: 500; font-size: 34px; letter-spacing: .8px; }
  .case { fill: none; stroke: #555; stroke-width: 1.8; }
  .mb { fill: #fff; stroke: #a5a5a5; stroke-width: 3; }
  .mbdrop { fill: #a5a5a5; }
  .mbstar { fill: #fff; }
  .mbtext { font: 700 32px "Open Sans", sans-serif; fill: #fff; stroke: #a5a5a5; stroke-width: 5; paint-order: stroke; stroke-linejoin: round; }
  .halo { fill: rgba(255,255,255,.8); }
  .dot { fill: #fff; }
  .stem { stroke: #fff; stroke-width: 4.6; stroke-linecap: round; }

  .bh { stroke: #ccc; stroke-width: 2.4; vector-effect: non-scaling-stroke; }
  .bv { fill: none; stroke: #bdbdbd; stroke-width: 1.7; vector-effect: non-scaling-stroke; }
  .dark { stroke: #9a9a9a; }
  .sub { font-size: 26px; fill: #666; stroke: #666; stroke-width: .7; text-anchor: middle; }
  .subline { stroke: #8c8c8c; stroke-width: 3; }
  .logoarc { fill: none; stroke: #c5d3d8; stroke-width: 3; }
  .logodot { fill: #4b7280; }
  .logo { font: 400 19px "Open Sans", sans-serif; fill: #6f8f9b; }
  .lb { font-weight: 600; }

  .timeline { padding-top: 2px; flex: 1; display: flex; flex-direction: column; }
  .bar { box-sizing: border-box; position: absolute; left: 0; right: 0; top: 2px; display: flex; align-items: flex-start; padding: 6px 0 0 6px; }
  .bar .expand { margin: 6px 0 0 8px; flex: none; }
  .bar .controls { top: 8px; }
  .range { display: flex; height: 40px; margin: 2px 0 0 530px; background: #fdfdfd; border-radius: 7px; box-shadow: 0 2px 3px rgba(0,0,0,.28); color: #5c5c5c; font: 400 25px/41px Inter, sans-serif; }
  .date { box-sizing: border-box; width: 253px; display: flex; justify-content: space-between; align-items: center; padding: 0 16px 0 10px; letter-spacing: 1.4px; }
  .weeks { box-sizing: border-box; width: 137px; border: solid #e6e6e6; border-width: 0 2px; text-align: center; white-space: nowrap; letter-spacing: .5px; }
  .cal { width: 20px; height: 22px; fill: #444; }
  .chart { display: block; background: #f9f9f9; flex: none; }
  .grid { stroke: #ddd; stroke-width: 2; }
  .tick { stroke: #888; stroke-width: 1.5; }
  .tick2 { stroke: #888; stroke-width: 2; }
  .num { font-size: 21px; text-anchor: end; }
  .month { font-size: 22px; }
  .brush { display: block; flex: none; }
  .frame { stroke: #aaa; stroke-width: 2; }
  .axis { stroke: #888; stroke-width: 2; }
  .gap { fill: #fff; }
  .count-bar { fill: #799fb1; }
  .btick { stroke: #4b7280; stroke-width: 2; }
  .bmonth { font-size: 20px; }
  .handle { fill: #aaa; }
  .corner { fill: #444; }

  aside { width: 33px; flex: none; border-left: 2px solid #ddd; display: flex; flex-direction: column; }
  .side { box-sizing: border-box; flex: none; border: 2px solid #b8b8b8; border-right: 0; display: flex; align-items: center; justify-content: center; color: #888; font-size: 22px; width: 33px; padding-left: 2px; }
  .side span { writing-mode: vertical-rl; letter-spacing: .2px; }
  .edge { margin: auto 0 0 auto; fill: #444; }
</style>
